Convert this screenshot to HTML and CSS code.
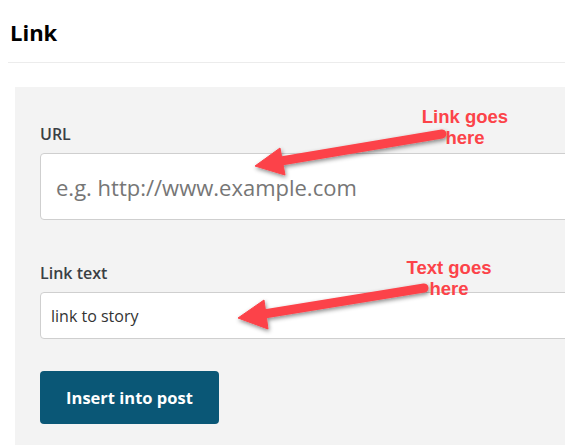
FILE: index.html
```html
<!DOCTYPE html>
<html lang="en">
<head>
<meta charset="utf-8">
<title>Link</title>
<link rel="stylesheet" href="styles.css">
</head>
<body>
<div class="page">
  <header class="header">
    <h1 class="title">Link</h1>
  </header>
  <section class="panel">
    <label class="label" for="url">URL</label>
    <input class="input input-url" id="url" type="text" placeholder="e.g. http://www.example.com">
    <label class="label label-text" for="ltext">Link text</label>
    <input class="input input-text" id="ltext" type="text" value="link to story">
    <button class="btn" type="button">Insert into post</button>
  </section>

  <svg class="arrows" width="565" height="445" viewBox="0 0 565 445" aria-hidden="true">
    <defs>
      <filter id="sh" x="-20%" y="-50%" width="140%" height="200%">
        <feDropShadow dx="1" dy="2" stdDeviation="2" flood-color="#000" flood-opacity="0.45"/>
      </filter>
    </defs>
    <g fill="#fc4349" stroke="#fc4349" filter="url(#sh)">
      <line x1="442" y1="134" x2="281" y2="161" stroke-width="9" stroke-linecap="round"/>
      <polygon points="255,166 280,148 285,175" stroke-width="1" stroke-linejoin="round"/>
    </g>
    <g fill="#fc4349" stroke="#fc4349" filter="url(#sh)">
      <line x1="424" y1="288" x2="264" y2="314" stroke-width="9" stroke-linecap="round"/>
      <polygon points="238,318 264,300 268,329" stroke-width="1" stroke-linejoin="round"/>
    </g>
  </svg>
  <div class="note note-link">Link goes<br>here</div>
  <div class="note note-text">Text goes<br>here</div>
</div>
</body>
</html>
```
FILE: styles.css
```css
html, body {
  margin: 0;
  padding: 0;
  background: #fff;
  overflow: hidden;
}
body {
  font-family: "Open Sans", "Noto Sans", sans-serif;
  width: 565px;
  height: 445px;
}
.page {
  position: relative;
  width: 565px;
  height: 445px;
  overflow: hidden;
}
.header {
  margin-left: 8px;
  padding: 17px 0 15px 2px;
  border-bottom: 1px solid #ececec;
}
.title {
  margin: 0;
  font-size: 22px;
  line-height: 30px;
  font-weight: 700;
  color: #000;
}
.panel {
  margin: 24px 0 0 15px;
  width: 620px;
  height: 400px;
  box-sizing: border-box;
  padding: 37px 0 40px 25px;
  background: #f3f3f3;
  display: flex;
  flex-direction: column;
  align-items: flex-start;
}
.label {
  font-size: 16px;
  line-height: 20px;
  font-weight: 600;
  color: #3a3f44;
  margin-bottom: 9px;
}
.label-text {
  margin-top: 43px;
}
.input {
  box-sizing: border-box;
  width: 580px;
  border: 1px solid #cfcfcf;
  border-radius: 4px;
  background: #fff;
  font-family: "Open Sans", "Noto Sans", sans-serif;
  outline: none;
  margin: 0;
}
.input-url {
  height: 67px;
  padding: 0 15px;
  font-size: 22px;
  color: #333;
}
.input-url::placeholder {
  color: #767676;
  opacity: 1;
}
.input-text {
  height: 47px;
  padding: 0 10px;
  font-size: 16px;
  color: #333;
}
.btn {
  margin-top: 32px;
  width: 179px;
  height: 53px;
  border: none;
  border-radius: 4px;
  background: #0a5776;
  color: #fff;
  font-family: "Open Sans", "Noto Sans", sans-serif;
  font-size: 16.5px;
  font-weight: 700;
  padding: 0;
}
.arrows {
  position: absolute;
  left: 0;
  top: 0;
  pointer-events: none;
}
.note {
  position: absolute;
  width: 120px;
  text-align: center;
  font-family: "Liberation Sans", Arial, sans-serif;
  font-weight: 700;
  font-size: 18.5px;
  line-height: 21px;
  color: #fc4349;
}
.note-link {
  left: 405px;
  top: 106px;
}
.note-text {
  left: 389px;
  top: 257px;
}
```
